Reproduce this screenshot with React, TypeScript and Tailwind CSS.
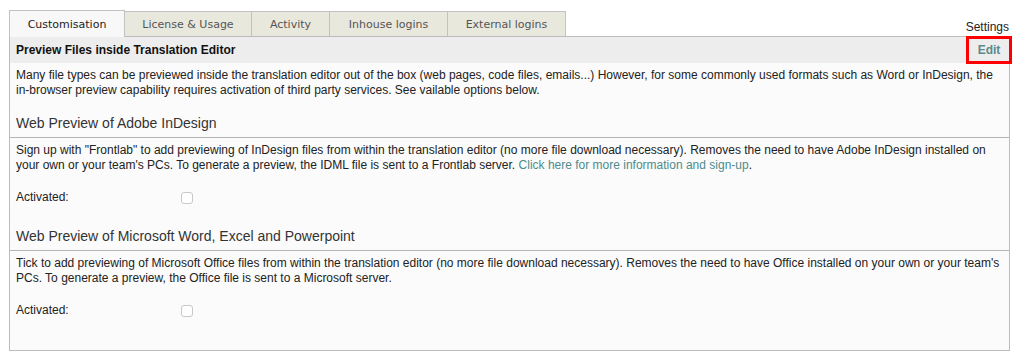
import React from "react";

const tabs = ["Customisation", "License & Usage", "Activity", "Inhouse logins", "External logins"];

const tabWidths = ["w-[116px]", "w-[128px]", "w-[79px]", "w-[119px]", "w-[119px]"];

function Checkbox() {
  return <div className="w-[12px] h-[12px] rounded-[3px] border border-[#c8c8c8] bg-white" />;
}

function ActivatedRow({ className = "" }: { className?: string }) {
  return (
    <div className={`flex items-center px-[6px] h-[15px] ${className}`}>
      <span className="w-[165px]">Activated:</span>
      <Checkbox />
    </div>
  );
}

function SectionHeading({ children, className = "" }: { children: React.ReactNode; className?: string }) {
  return (
    <h2 className={`border-b border-[#b4b4b4] px-[6px] pb-[4px] text-[14px] leading-[20px] text-[#333] ${className}`}>
      {children}
    </h2>
  );
}

export default function App() {
  return (
    <div
      className="w-[1019px] h-[359px] bg-white text-[12px] leading-[15px] text-[#222]"
      style={{ fontFamily: '"Liberation Sans", Arial, sans-serif' }}
    >
      <div className="pl-[9px] w-[1010px] pt-[10px]">
        {/* tabs */}
        <div className="flex items-end justify-between h-[26px]">
          <div className="flex items-end h-full">
            {tabs.map((t, i) => (
              <div
                key={t}
                className={`${tabWidths[i]} flex items-center justify-center border border-b-0 border-[#c2c2c2] -ml-px first:ml-0 text-[11px] ${
                  i === 0 ? "h-[27px] bg-[#f8f8f8] text-[#222] relative z-10 -mb-px" : "h-[25px] bg-[#e9e8dd] text-[#555]"
                }`}
                style={{ fontFamily: '"DejaVu Sans", Verdana, sans-serif' }}
              >
                {t}
              </div>
            ))}
          </div>
          <span className="pb-[1px] pr-[1px] text-[12px] text-[#222]">Settings</span>
        </div>

        {/* panel */}
        <div className="w-[1001px] h-[315px] border border-[#bcbcbc] bg-[#fbfbfb]">
          <div className="flex items-center justify-between h-[26px] bg-[#ededed] pl-[6px]">
            <span className="font-bold text-[#111]">Preview Files inside Translation Editor</span>
            <span className="relative -mr-[3px] flex items-center justify-center w-[46px] h-[28px] border-[3px] border-[#ff0000] font-bold text-[#5b8b8c]">
              Edit
            </span>
          </div>

          <p className="px-[6px] pt-[5px]">
            Many file types can be previewed inside the translation editor out of the box (web pages, code files,
            emails...) However, for some commonly used formats such as Word or InDesign, the
            <br />
            in-browser preview capability requires activation of third party services. See vailable options below.
          </p>

          <SectionHeading className="mt-[15px]">Web Preview of Adobe InDesign</SectionHeading>

          <p className="px-[6px] pt-[5px]">
            Sign up with "Frontlab" to add previewing of InDesign files from within the translation editor (no more
            file download necessary). Removes the need to have Adobe InDesign installed on
            <br />
            your own or your team's PCs. To generate a preview, the IDML file is sent to a Frontlab server.{" "}
            <a className="text-[#4d8b8c]">Click here for more information and sign-up</a>.
          </p>

          <ActivatedRow className="mt-[17px]" />

          <SectionHeading className="mt-[21px]">Web Preview of Microsoft Word, Excel and Powerpoint</SectionHeading>

          <p className="px-[6px] pt-[5px]">
            Tick to add previewing of Microsoft Office files from within the translation editor (no more file download
            necessary). Removes the need to have Office installed on your own or your team's
            <br />
            PCs. To generate a preview, the Office file is sent to a Microsoft server.
          </p>

          <ActivatedRow className="mt-[17px]" />
        </div>
      </div>
    </div>
  );
}
